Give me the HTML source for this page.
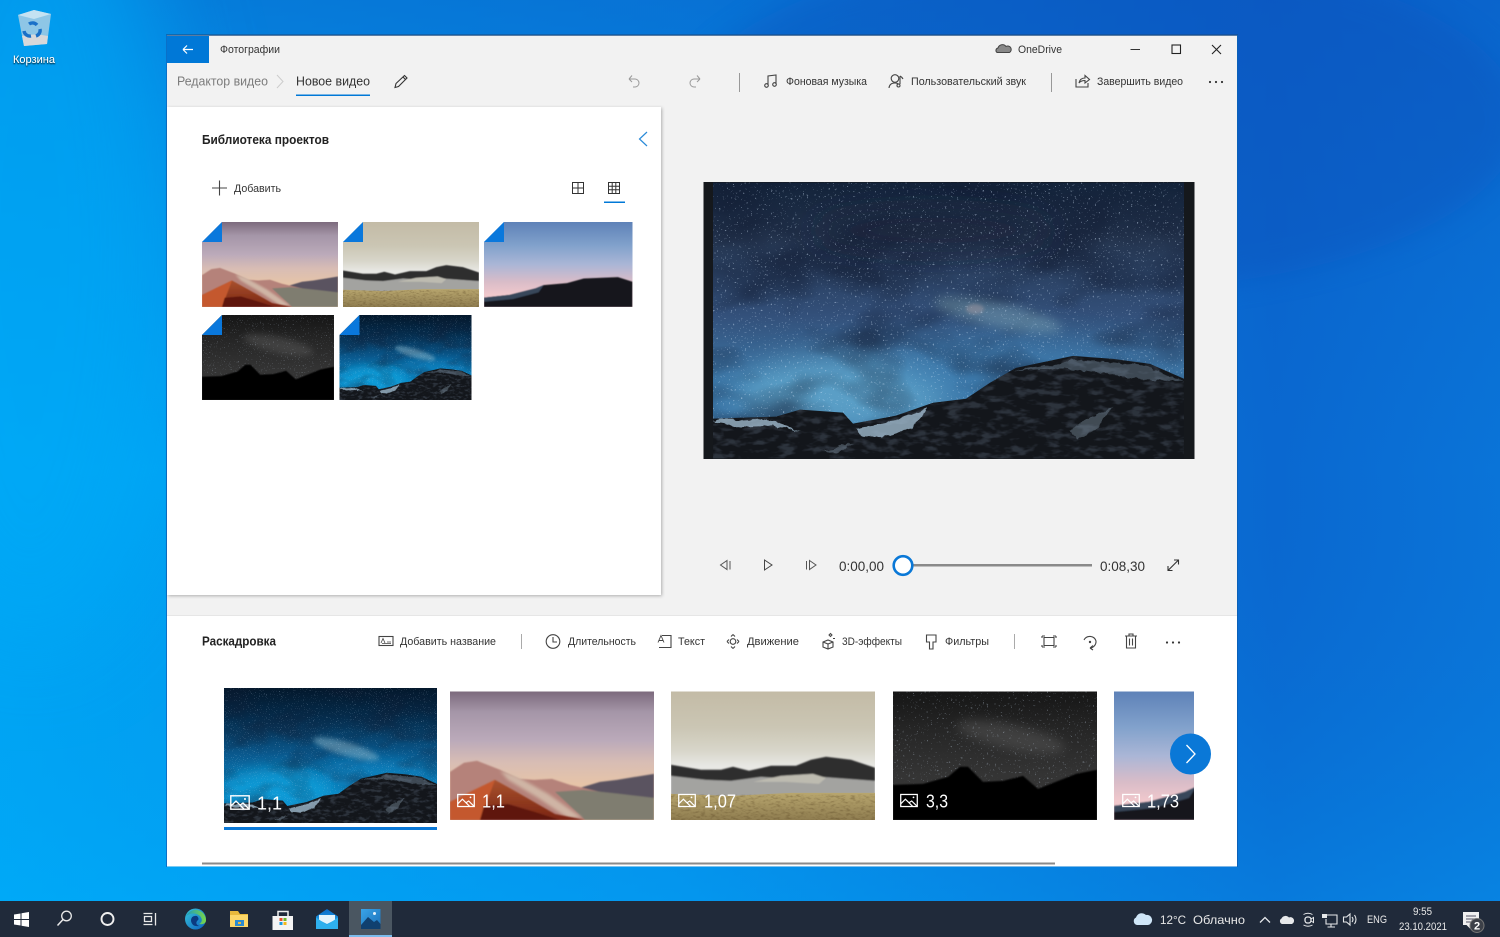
<!DOCTYPE html>
<html lang="ru"><head><meta charset="utf-8"><title>Фотографии</title>
<style>
html,body{margin:0;padding:0;width:1500px;height:937px;overflow:hidden;background:#0a80e0}
svg{display:block}
#page{filter:blur(.3px)}
text{font-family:"Liberation Sans","DejaVu Sans",sans-serif;fill:#333;white-space:pre}
.t{font-size:11px}
.b{font-size:13px;font-weight:bold;fill:#222}
.n{font-size:18px;fill:#fff}
.tb{font-size:12px;fill:#e8e8e8}
.i{fill:none;stroke:#444;stroke-width:1.1}
.w{fill:none;stroke:#fff;stroke-width:1.4}
.l{fill:none;stroke:#e6e8ea;stroke-width:1.3}
</style></head><body>
<svg id="page" width="1500" height="937" viewBox="0 0 1500 937" xmlns="http://www.w3.org/2000/svg">
<defs>
<linearGradient id="bg0" x1="0" y1="0" x2="1" y2="0"><stop offset="0" stop-color="#00a9f6"/><stop offset=".45" stop-color="#0590ea"/><stop offset=".85" stop-color="#0a68d0"/><stop offset="1" stop-color="#0a74d8"/></linearGradient>
<linearGradient id="bg1" x1="0" y1="0" x2="0" y2="1"><stop offset="0" stop-color="#0a55c0" stop-opacity=".5"/><stop offset=".5" stop-color="#0a60c8" stop-opacity="0"/><stop offset="1" stop-color="#00b0ff" stop-opacity=".3"/></linearGradient>
<filter id="b05" x="-10%" y="-10%" width="120%" height="120%"><feGaussianBlur stdDeviation=".8"/></filter>
<filter id="b1" x="-20%" y="-20%" width="140%" height="140%"><feGaussianBlur stdDeviation="1.500"/></filter>
<filter id="b4" x="-30%" y="-30%" width="160%" height="160%"><feGaussianBlur stdDeviation="5"/></filter>
<filter id="b12" x="-50%" y="-50%" width="200%" height="200%"><feGaussianBlur stdDeviation="14"/></filter>
<filter id="b40" x="-50%" y="-50%" width="200%" height="200%"><feGaussianBlur stdDeviation="50"/></filter>
<filter id="stars" x="0" y="0" width="100%" height="100%" color-interpolation-filters="sRGB"><feTurbulence type="fractalNoise" baseFrequency="0.5" numOctaves="2" seed="7"/><feColorMatrix values="0 0 0 0 .85 0 0 0 0 .92 0 0 0 0 1 16 0 0 0 -11"/></filter>
<filter id="clouds" x="0" y="0" width="100%" height="100%" color-interpolation-filters="sRGB"><feTurbulence type="fractalNoise" baseFrequency="0.01 0.018" numOctaves="3" seed="11"/><feColorMatrix values="0 0 0 0 .07 0 0 0 0 .11 0 0 0 0 .2 3 0 0 0 -1.3"/></filter>
<filter id="mtex" x="0" y="0" width="100%" height="100%" color-interpolation-filters="sRGB"><feTurbulence type="fractalNoise" baseFrequency="0.06 0.14" numOctaves="3" seed="5"/><feColorMatrix values="0 0 0 0 .3 0 0 0 0 .34 0 0 0 0 .4 4 0 0 0 -1.9"/></filter>
<filter id="grain" x="0" y="0" width="100%" height="100%" color-interpolation-filters="sRGB"><feTurbulence type="fractalNoise" baseFrequency="0.2 0.5" numOctaves="2" seed="4"/><feColorMatrix values="0 0 0 0 .3 0 0 0 0 .22 0 0 0 0 .1 3 0 0 0 -1.4"/></filter>
<filter id="rough" x="-5%" y="-5%" width="110%" height="110%" color-interpolation-filters="sRGB"><feTurbulence type="fractalNoise" baseFrequency="0.09" numOctaves="3" seed="9" result="n"/><feDisplacementMap in="SourceGraphic" in2="n" scale="7" xChannelSelector="R" yChannelSelector="G"/></filter>
<filter id="sh" x="-5%" y="-5%" width="110%" height="110%"><feDropShadow dx="1" dy="1" stdDeviation="1.500" flood-color="#000" flood-opacity=".28"/></filter>
<filter id="ts" x="-10%" y="-30%" width="120%" height="160%"><feDropShadow dx="0" dy="1" stdDeviation=".8" flood-color="#000" flood-opacity="1"/></filter>
<clipPath id="mclip"><path d="M0 237L63 235 87 228 130 231 140 242 183 234 220 221 253 217 277 201 303 186 360 174 400 177 437 182 471 197V277H0Z"/></clipPath>

<linearGradient id="rs" x1="0" y1="0" x2="0" y2="1"><stop offset="0" stop-color="#7c6a7d"/><stop offset=".16" stop-color="#a596a8"/><stop offset=".38" stop-color="#bbaaba"/><stop offset=".55" stop-color="#d8bdb4"/><stop offset=".72" stop-color="#e6c4a8"/></linearGradient>
<linearGradient id="rr" x1="0" y1="0" x2="0" y2="1"><stop offset="0" stop-color="#a9522e"/><stop offset="1" stop-color="#7a2412"/></linearGradient>
<symbol id="rose" viewBox="0 0 204 128" preserveAspectRatio="none">
<rect width="204" height="128" fill="url(#rs)"/>
<g filter="url(#b05)">
<path d="M130 96L150 90 167 88 204 82V128H130Z" fill="#5a5360"/>
<path d="M0 80L14 71 27 69 50 78 70 87 84 88 102 87 120 93 133 96 150 100 204 112V128H0Z" fill="#b5827a"/>
<path d="M105 100L133 98 170 102 204 106V128H135Z" fill="#7f7d70"/>
</g>
<path d="M50 79L66 84 98 102 132 126H118L88 106 58 88Z" fill="#d6c2b0" opacity=".8" filter="url(#b1)"/>
<g filter="url(#b05)">
<path d="M45 88L70 102 105 122 135 128H0V110Z" fill="url(#rr)"/>
<path d="M0 110L22 99 45 88 30 128H0Z" fill="#c4592e"/>
<path d="M30 128L34 114 58 112 85 120 110 128Z" fill="#5e180c"/>
</g>
</symbol>

<linearGradient id="ss" x1="0" y1="0" x2="0" y2="1"><stop offset="0" stop-color="#c3bba6"/><stop offset=".28" stop-color="#cbc6b4"/><stop offset=".46" stop-color="#d8d6ca"/><stop offset=".58" stop-color="#e8e8e4"/></linearGradient>
<linearGradient id="sf" x1="0" y1="0" x2="0" y2="1"><stop offset="0" stop-color="#b8a66e"/><stop offset="1" stop-color="#8f7d50"/></linearGradient>
<symbol id="sand" viewBox="0 0 204 128" preserveAspectRatio="none">
<rect width="204" height="128" fill="url(#ss)"/>
<g filter="url(#b05)">
<path d="M0 73L30 78 50 78 62 75 78 79 100 74 125 74 140 68 155 65 180 68 204 76V98H0Z" fill="#2f2e2e"/>
<path d="M0 84L35 88 60 89 90 85 120 87 150 85 204 89V108H0Z" fill="#a3a3a0"/>
<path d="M82 90L110 84 142 82 155 86 148 92 115 90Z" fill="#bdbbb0"/>
</g>
<path d="M0 102L60 104 120 101 204 101V128H0Z" fill="url(#sf)"/>
<rect y="103" width="204" height="25" filter="url(#grain)" opacity=".3"/>
</symbol>

<linearGradient id="nb" x1="0" y1="0" x2="0" y2="1"><stop offset="0" stop-color="#161616"/><stop offset=".3" stop-color="#262626"/><stop offset=".65" stop-color="#343434"/></linearGradient>
<symbol id="night" viewBox="0 0 204 128" preserveAspectRatio="none">
<rect width="204" height="128" fill="url(#nb)"/>
<ellipse cx="118" cy="45" rx="55" ry="12" fill="#777" opacity=".3" transform="rotate(12 118 45)" filter="url(#b4)"/>
<rect width="204" height="100" filter="url(#stars)" opacity=".3"/>
<path d="M0 93L30 92 55 85 67 75 75 75 90 90 110 89 130 84 145 97 183 82 204 78V128H0Z" fill="#050505" filter="url(#b05)"/>
</symbol>

<linearGradient id="ds" x1="0" y1="0" x2="0" y2="1"><stop offset="0" stop-color="#5e82b8"/><stop offset=".28" stop-color="#82a2cc"/><stop offset=".5" stop-color="#aab6d6"/><stop offset=".7" stop-color="#d8bcc8"/><stop offset=".85" stop-color="#f0c8cc"/></linearGradient>
<symbol id="dusk" viewBox="0 0 204 128" preserveAspectRatio="none">
<rect width="204" height="128" fill="url(#ds)"/>
<g filter="url(#b05)">
<path d="M0 114L35 110 71 100 82 95 114 92 137 85 184 83 204 90V128H0Z" fill="#14171d"/>
<path d="M0 114L35 110 71 100 82 95 75 106 40 116 0 120Z" fill="#39465a"/>
</g>
</symbol>

<linearGradient id="gs" x1="0" y1="0" x2="0" y2="1"><stop offset="0" stop-color="#13233a"/><stop offset=".2" stop-color="#24344e"/><stop offset=".48" stop-color="#33507a"/><stop offset=".72" stop-color="#3d78a8"/></linearGradient>
<linearGradient id="cs" x1="0" y1="0" x2="0" y2="1"><stop offset="0" stop-color="#03182c"/><stop offset=".22" stop-color="#052c4c"/><stop offset=".5" stop-color="#0a5a8f"/><stop offset=".78" stop-color="#0e88c4"/></linearGradient>
<symbol id="mts" viewBox="0 0 471 277" preserveAspectRatio="none">
<path d="M0 237L63 235 87 228 130 231 140 242 183 234 220 221 253 217 277 201 303 186 360 174 400 177 437 182 471 197V277H0Z" fill="#13161b"/>
<g clip-path="url(#mclip)">
<rect y="170" width="471" height="107" filter="url(#mtex)" opacity=".45"/>
<g filter="url(#rough)">
<path d="M0 238L40 237 63 241 88 250 60 244 20 246ZM142 247L183 239 215 227 198 247 170 256 150 254Z" fill="#a8c4d8" opacity=".75"/>
<path d="M300 189L360 178 400 180 437 186 471 199 430 198 395 192 350 186Z" fill="#7e94a8" opacity=".4"/>
<path d="M355 250L400 224 385 245 365 258ZM110 270L140 262 125 272Z" fill="#7a8c9c" opacity=".45"/>
</g>
</g>
</symbol>
<symbol id="prev" viewBox="0 0 471 277" preserveAspectRatio="none">
<rect width="471" height="277" fill="url(#gs)"/>
<ellipse cx="130" cy="212" rx="105" ry="36" fill="#62a8ce" opacity=".8" filter="url(#b12)"/>
<ellipse cx="300" cy="185" rx="120" ry="30" fill="#3f80b4" opacity=".55" filter="url(#b12)"/>
<rect width="471" height="240" filter="url(#clouds)" opacity=".55"/>
<ellipse cx="285" cy="133" rx="65" ry="12" fill="#7fa8b8" opacity=".45" transform="rotate(12 285 133)" filter="url(#b4)"/>
<ellipse cx="262" cy="127" rx="9" ry="5" fill="#c5a8a8" opacity=".35" filter="url(#b1)"/>
<ellipse cx="220" cy="48" rx="120" ry="22" fill="#121b30" opacity=".5" filter="url(#b12)"/>
<rect width="471" height="240" filter="url(#stars)" opacity=".42"/>
<use href="#mts" width="471" height="277"/>
</symbol>
<symbol id="galaxy" viewBox="0 0 471 277" preserveAspectRatio="none">
<rect width="471" height="277" fill="url(#cs)"/>
<ellipse cx="120" cy="205" rx="120" ry="40" fill="#0fa0dc" opacity=".75" filter="url(#b12)"/>
<ellipse cx="330" cy="175" rx="120" ry="28" fill="#0c88c8" opacity=".6" filter="url(#b12)"/>
<rect width="471" height="240" filter="url(#clouds)" opacity=".35"/>
<ellipse cx="270" cy="125" rx="75" ry="14" fill="#8ab8cc" opacity=".5" transform="rotate(15 270 125)" filter="url(#b4)"/>
<rect width="471" height="240" filter="url(#stars)" opacity=".35"/>
<use href="#mts" width="471" height="277"/>
</symbol>
<symbol id="img" viewBox="0 0 20 15"><rect x=".8" y=".8" width="18.4" height="13.4" fill="none" stroke="#fff" stroke-width="1.4"/><path d="M1 11L6 6 14 14M10 10L13 8 19 14" fill="none" stroke="#fff" stroke-width="1.3"/><circle cx="15" cy="4" r="1" fill="#fff"/></symbol>
<linearGradient id="edge1" x1="0" y1="0" x2="1" y2="1"><stop offset="0" stop-color="#39c6d8"/><stop offset="1" stop-color="#0a5ec0"/></linearGradient>
<linearGradient id="edge2" x1="0" y1="0" x2="1" y2="0"><stop offset="0" stop-color="#1a9ac0"/><stop offset="1" stop-color="#7ad648"/></linearGradient>
<linearGradient id="mail" x1="0" y1="0" x2="0" y2="1"><stop offset="0" stop-color="#0a6cc8"/><stop offset="1" stop-color="#2cb4f2"/></linearGradient>
<linearGradient id="ph" x1="0" y1="0" x2="1" y2="1"><stop offset="0" stop-color="#3aa4e8"/><stop offset="1" stop-color="#1a70b8"/></linearGradient>
</defs>

<!-- Desktop -->
<rect width="1500" height="937" fill="url(#bg0)"/>
<rect width="1500" height="937" fill="url(#bg1)"/>
<ellipse cx="1100" cy="120" rx="420" ry="170" fill="#0a50b8" opacity=".35" filter="url(#b12)"/>
<ellipse cx="30" cy="250" rx="150" ry="400" fill="#00a8f6" opacity=".7" filter="url(#b40)"/>

<!-- Recycle bin -->
<path d="M18 15L34 10 51 14 47 44 24 46Z" fill="#8ec6e6"/>
<path d="M18 15L34 19 51 14 34 10Z" fill="#c4e2f2"/>
<path d="M22 36Q34 33 48 36L47 44 24 46Z" fill="#d8d8da"/>
<path d="M29 24A6 6 0 0 1 37 25M40 29A6 6 0 0 1 36 36M31 36A6 6 0 0 1 24 31" fill="none" stroke="#1a70c8" stroke-width="3.4"/>
<text x="13" y="63" font-size="11" textLength="42" lengthAdjust="spacingAndGlyphs" style="fill:#fff" filter="url(#ts)">Корзина</text>

<!-- Window -->
<rect x="166" y="35" width="1071.5" height="831.5" fill="#f2f2f2"/>
<rect x="166" y="34.500" width="1072" height="1.200" fill="#1a4a80"/>
<rect x="166" y="35" width="1" height="832" fill="#0a70c8"/>
<rect x="1237" y="35" width="1" height="832" fill="#0a60b8"/>
<rect x="167" y="36" width="42" height="27" fill="#0078d7"/>
<path d="M183 49.500H193M183 49.500L187 45.500M183 49.500L187 53.500" fill="none" stroke="#fff" stroke-width="1.200"/>
<text class="t" x="220" y="53" textLength="60" lengthAdjust="spacingAndGlyphs">Фотографии</text>
<path d="M997 52.500A2.500 2.500 0 0 1 998 48A4.500 4.500 0 0 1 1006 46.500A3 3 0 0 1 1009.500 52.500Z" fill="#888" stroke="#444"/>
<text class="t" x="1018" y="53" textLength="44" lengthAdjust="spacingAndGlyphs">OneDrive</text>
<path d="M1130.500 49.500H1140" stroke="#333" fill="none"/>
<rect x="1172" y="45" width="8.500" height="8.500" class="i" style="stroke:#222"/>
<path d="M1212 45L1221 54M1221 45L1212 54" stroke="#222" stroke-width="1.100" fill="none"/>

<!-- Breadcrumb -->
<text x="177" y="85.500" font-size="13" textLength="91" lengthAdjust="spacingAndGlyphs" style="fill:#7c7c7c">Редактор видео</text>
<path d="M277 75L283 81.500 277 88" fill="none" stroke="#ccc"/>
<text x="296" y="85.500" font-size="13" textLength="74" lengthAdjust="spacingAndGlyphs">Новое видео</text>
<rect x="296" y="94.500" width="74" height="1.500" fill="#0078d7"/>
<path d="M395 87.500L396 83.500 404.500 75.500 407 78 398.500 86.500ZM403 77L405.500 79.500" class="i" style="stroke:#333"/>
<path d="M629 79H635A4 4 0 0 1 635 87H633M629 79L632 75.500M629 79L632 82" fill="none" stroke="#999"/>
<path d="M700 79H694A4 4 0 0 0 694 87H696M700 79L697 75.500M700 79L697 82" fill="none" stroke="#999"/>
<rect x="739" y="73" width="1" height="19" fill="#999"/>
<rect x="1051" y="73" width="1" height="19" fill="#999"/>
<path d="M768 85V76L776 75V84" class="i"/><circle cx="766.500" cy="85.500" r="1.800" class="i"/><circle cx="774.500" cy="84.500" r="1.800" class="i"/>
<text class="t" x="786" y="85" textLength="81" lengthAdjust="spacingAndGlyphs">Фоновая музыка</text>
<circle cx="895" cy="78.500" r="3.800" class="i"/><path d="M889 88Q889.500 83 895 83Q897 83 898.500 84M900 76V84M900 76Q902 77 903 79" class="i"/><circle cx="898.500" cy="85.500" r="1.500" class="i"/>
<text class="t" x="911" y="85" textLength="115" lengthAdjust="spacingAndGlyphs">Пользовательский звук</text>
<path d="M1076 79V87H1088V83M1079 83Q1080 78 1085 78V75.500L1089.500 79.500 1085 83V80.500Q1081 80.500 1079 83Z" class="i"/>
<text class="t" x="1097" y="85" textLength="86" lengthAdjust="spacingAndGlyphs">Завершить видео</text>
<g fill="#333"><circle cx="1210" cy="82" r="1.100"/><circle cx="1216" cy="82" r="1.100"/><circle cx="1222" cy="82" r="1.100"/></g>

<!-- Library panel -->
<rect x="167" y="107" width="494" height="488" fill="#fff" filter="url(#sh)"/>
<text class="b" x="202" y="144" textLength="127" lengthAdjust="spacingAndGlyphs">Библиотека проектов</text>
<path d="M647 132L639.500 139 647 146" fill="none" stroke="#2a8ad8" stroke-width="1.200"/>
<path d="M219.500 180.500V195.500M212 188H227" fill="none" stroke="#444" stroke-width="1.100"/>
<text class="t" x="234" y="192" textLength="47" lengthAdjust="spacingAndGlyphs">Добавить</text>
<path d="M572.500 182.500H583.500V193.500H572.500ZM578 182.500V193.500M572.500 188H583.500" fill="none" stroke="#333" stroke-width="1"/>
<path d="M608.500 182.500H619.500V193.500H608.500ZM612.200 182.500V193.500M615.800 182.500V193.500M608.500 186.200H619.500M608.500 189.800H619.500" fill="none" stroke="#333" stroke-width="1"/>
<rect x="604" y="201.500" width="21" height="1.500" fill="#0078d7"/>

<use href="#rose" x="202" y="222" width="136" height="85"/>
<use href="#sand" x="343" y="222" width="136" height="85"/>
<use href="#dusk" x="484" y="222" width="148.500" height="85"/>
<use href="#night" x="202" y="315" width="132" height="85"/>
<use href="#galaxy" x="339.500" y="315" width="132" height="85"/>
<g fill="#fff"><path d="M202 222H222L202 242Z"/><path d="M343 222H363L343 242Z"/><path d="M484 222H504L484 242Z"/><path d="M202 315H222L202 335Z"/><path d="M339.500 315H359.500L339.500 335Z"/></g>
<g fill="#0a78dc"><path d="M222 222V242H202Z"/><path d="M363 222V242H343Z"/><path d="M504 222V242H484Z"/><path d="M222 315V335H202Z"/><path d="M359.500 315V335H339.500Z"/></g>

<!-- Preview -->
<rect x="703.500" y="182" width="491" height="277" fill="#15181c"/>
<use href="#prev" x="713" y="182.500" width="471" height="276"/>

<!-- Player -->
<path d="M730 561V569.500M727 560.500L720.500 565 727 569.500Z" fill="none" stroke="#555"/>
<path d="M764.500 560L772 565 764.500 570Z" fill="none" stroke="#444"/>
<path d="M806.500 561V569.500M809.500 560.500L816 565 809.500 569.500Z" fill="none" stroke="#555"/>
<text x="839" y="571" font-size="14" textLength="45" lengthAdjust="spacingAndGlyphs">0:00,00</text>
<rect x="910" y="564" width="182" height="2.500" fill="#8a8a8a"/>
<circle cx="903" cy="565.500" r="9.300" fill="#fff" stroke="#0a78d7" stroke-width="2.600"/>
<text x="1100" y="571" font-size="14" textLength="45" lengthAdjust="spacingAndGlyphs">0:08,30</text>
<path d="M1168 570.500L1178.500 560M1174 560H1178.500V564.500M1168 566V570.500H1172.500" fill="none" stroke="#333" stroke-width="1.100"/>

<!-- Storyboard -->
<rect x="167" y="616" width="1070" height="250" fill="#fff"/>
<rect x="167" y="615" width="1070" height="1" fill="#e6e6e6"/>
<text class="b" x="202" y="645.500" textLength="74" lengthAdjust="spacingAndGlyphs">Раскадровка</text>
<rect x="379" y="636.500" width="14" height="9" class="i"/><path d="M381 643L383 638.500 385 643M387 642H391M382 643.500H391" fill="none" stroke="#444" stroke-width=".8"/>
<text class="t" x="400" y="645" textLength="96" lengthAdjust="spacingAndGlyphs">Добавить название</text>
<rect x="521" y="634" width="1" height="15" fill="#aaa"/>
<circle cx="553" cy="641.500" r="6.800" class="i"/><path d="M553 637V642H557" class="i"/>
<text class="t" x="568" y="645" textLength="68" lengthAdjust="spacingAndGlyphs">Длительность</text>
<path d="M662 635.500H671V647.500H659" class="i"/><path d="M658 642.500L661 635.500 664 642.500M659 640.500H663" fill="none" stroke="#444" stroke-width=".9"/>
<text class="t" x="678" y="645" textLength="27" lengthAdjust="spacingAndGlyphs">Текст</text>
<circle cx="733" cy="641.500" r="2.800" class="i"/><path d="M733 634.500L735 636.500M733 634.500L731 636.500M733 648.500L735 646.500M733 648.500L731 646.500M727 641.500L729 639.500M727 641.500L729 643.500M739 641.500L737 639.500M739 641.500L737 643.500" class="i"/>
<text class="t" x="747" y="645" textLength="52" lengthAdjust="spacingAndGlyphs">Движение</text>
<path d="M823 642L828 640 833 642V647L828 649 823 647ZM823 642L828 644 833 642M828 644V649" class="i"/><path d="M829 635L830.500 636.500 832 635 830.500 633.500ZM833 638.500H835" fill="none" stroke="#444"/>
<text class="t" x="842" y="645" textLength="60" lengthAdjust="spacingAndGlyphs">3D-эффекты</text>
<path d="M926.500 635H936V642H933V649H929.500V642H926.500Z" class="i"/>
<text class="t" x="945" y="645" textLength="44" lengthAdjust="spacingAndGlyphs">Фильтры</text>
<rect x="1014" y="634" width="1" height="15" fill="#aaa"/>
<path d="M1044 637.500H1054V645.500H1044ZM1042 636V638M1042 636H1045M1056 636V638M1056 636H1053M1042 647V645M1042 647H1045M1056 647V645M1056 647H1053" class="i"/>
<path d="M1084 640A6.500 6.500 0 0 1 1096 641A6.500 6.500 0 0 1 1090 648M1090 648L1093 645.500M1090 648L1093 650" class="i"/><circle cx="1090" cy="642" r="1.200" fill="#444"/>
<path d="M1125 636H1137M1129 636V634H1133V636M1126.500 636V648H1135.500V636M1129.500 638.500V645.500M1132.500 638.500V645.500" class="i"/>
<g fill="#333"><circle cx="1167" cy="642.500" r="1.100"/><circle cx="1173" cy="642.500" r="1.100"/><circle cx="1179" cy="642.500" r="1.100"/></g>

<use href="#galaxy" x="224" y="688" width="213" height="135"/>
<rect x="224" y="827" width="213" height="3" fill="#0a78d7"/>
<use href="#rose" x="450" y="691.500" width="204" height="128.500"/>
<use href="#sand" x="671" y="691.500" width="204" height="128.500"/>
<use href="#night" x="893" y="691.500" width="204" height="128.500"/>
<svg x="1114" y="691.500" width="80" height="128.500" viewBox="0 0 80 128.500"><use href="#dusk" width="204" height="128.500"/></svg>

<use href="#img" x="230" y="795" width="20" height="15"/>
<text class="n" x="257" y="809.500" textLength="25" lengthAdjust="spacingAndGlyphs">1,1</text>
<use href="#img" x="457" y="793.500" width="18" height="14"/>
<text class="n" x="482" y="807.500" textLength="23" lengthAdjust="spacingAndGlyphs">1,1</text>
<use href="#img" x="678" y="793.500" width="18" height="14"/>
<text class="n" x="704" y="807.500" textLength="32" lengthAdjust="spacingAndGlyphs">1,07</text>
<use href="#img" x="900" y="793.500" width="18" height="14"/>
<text class="n" x="926" y="807.500" textLength="22" lengthAdjust="spacingAndGlyphs">3,3</text>
<use href="#img" x="1122" y="793.500" width="18" height="14"/>
<text class="n" x="1147" y="807.500" textLength="32" lengthAdjust="spacingAndGlyphs">1,73</text>

<circle cx="1190.500" cy="754" r="20.500" fill="#0a78d7"/>
<path d="M1186.500 745L1195 754 1186.500 763" fill="none" stroke="#fff" stroke-width="1.300"/>
<rect x="202" y="862.500" width="853" height="2" fill="#8a8a8a"/>

<!-- Taskbar -->
<rect y="901" width="1500" height="36" fill="#202a3a"/>
<rect x="349" y="901" width="43" height="36" fill="#4a5661"/>
<rect x="349" y="935" width="43" height="2" fill="#7cbcec"/>
<path d="M14 914.500L20.500 913.500V919H14ZM21.500 913.300L29 912V919H21.500ZM14 920H20.500V925.500L14 924.500ZM21.500 920H29V927L21.500 925.700Z" fill="#fff"/>
<circle cx="66.500" cy="916" r="4.800" fill="none" stroke="#e8e8e8" stroke-width="1.300"/><path d="M63 919.500L57.500 925.500" stroke="#e8e8e8" stroke-width="1.500"/>
<circle cx="107.500" cy="919" r="6" fill="none" stroke="#f0f0f0" stroke-width="1.900"/>
<path d="M143.500 913.500H152.500M143.500 924.500H152.500M144.500 916.500H151.500V921.500H144.500ZM155.500 913V925.500" fill="none" stroke="#e8e8e8" stroke-width="1.300"/>
<circle cx="195.500" cy="919" r="10.500" fill="url(#edge1)"/>
<path d="M186 916A10.500 10.500 0 0 1 206 921Q205 925 199 924Q204 921 200 916Q194 911 186 916Z" fill="url(#edge2)"/>
<path d="M191 921Q191 915 197 916Q200 919 197 921Q195 924 199 926Q192 927 191 921Z" fill="#0b3a80"/>
<path d="M230 911H238L240 914H248V927H230Z" fill="#e8b93c"/><rect x="230" y="915" width="18" height="12" fill="#fcd768"/><rect x="235" y="920" width="9" height="6" fill="#2a8ad0"/><rect x="238" y="922" width="3" height="2" fill="#e8b93c"/>
<rect x="272.500" y="916" width="20.500" height="14" fill="#f4f4f4"/><path d="M278 916V911.500H288V916" fill="none" stroke="#f0f0f0" stroke-width="1.500"/>
<rect x="279.500" y="918" width="3" height="3" fill="#e8502a"/><rect x="283.500" y="918" width="3" height="3" fill="#6cb82c"/><rect x="279.500" y="922" width="3" height="3" fill="#1a9ae0"/><rect x="283.500" y="922" width="3" height="3" fill="#f4b81a"/>
<path d="M316 916.500L327 909 338 916.500V929H316Z" fill="url(#mail)"/><path d="M319 915H335V920L327 924 319 920Z" fill="#e4f4fc"/><path d="M316 917.500L327 925 338 917.500V929H316Z" fill="#2eb0ee"/>
<rect x="361" y="909" width="19.500" height="20" fill="url(#ph)"/><circle cx="374.500" cy="913.500" r="1.500" fill="#e8f4fc"/><path d="M361 925L368 917 374 922 377 920 380.500 924V929H361Z" fill="#10406f"/>

<path d="M1137 925A4 4 0 0 1 1136 917.500A6 6 0 0 1 1146 915A5 5 0 0 1 1148 925Z" fill="#cfe6f8"/>
<text class="tb" x="1160" y="924" font-size="13" textLength="26" lengthAdjust="spacingAndGlyphs">12°C</text>
<text class="tb" x="1193" y="924" textLength="52" lengthAdjust="spacingAndGlyphs">Облачно</text>
<path d="M1260 922.500L1265 917.500 1270 922.500" class="l"/>
<path d="M1282 924A3 3 0 0 1 1281.500 918.500A4.500 4.500 0 0 1 1289 917.500A3.200 3.200 0 0 1 1292 924Z" fill="#e6e8ea"/>
<rect x="1305" y="917" width="6" height="6" rx="2.500" class="l"/><path d="M1303.500 914.500Q1308 912 1312.500 914.500M1303.500 925Q1308 927.500 1312.500 925M1311 919L1313.500 917.500V922.500L1311 921" class="l" style="stroke-width:1"/>
<path d="M1326 915H1337V924H1326V919M1331 924V927M1327.500 927H1335" class="l" style="stroke-width:1.100"/><rect x="1322" y="914" width="5" height="4" fill="#e6e8ea"/>
<path d="M1343.500 917H1346.500L1350 914V925L1346.500 922H1343.500ZM1352 917Q1354 919.500 1352 922M1354.500 915Q1357.500 919.500 1354.500 924" class="l" style="stroke-width:1.100"/>
<text class="tb" x="1367" y="923" style="font-size:11px" textLength="20" lengthAdjust="spacingAndGlyphs">ENG</text>
<text class="tb" x="1413" y="915" style="font-size:11px" textLength="19" lengthAdjust="spacingAndGlyphs">9:55</text>
<text class="tb" x="1399" y="930" style="font-size:11px" textLength="48" lengthAdjust="spacingAndGlyphs">23.10.2021</text>
<path d="M1463 912H1479V925H1470V928.500L1466.500 925H1463Z" fill="#f0f0f0"/><path d="M1466 916H1476M1466 919H1476M1466 922H1472" stroke="#556" stroke-width="1"/>
<circle cx="1477" cy="925.500" r="7" fill="#3c4048" stroke="#777"/>
<text x="1477" y="929.500" font-size="11" font-weight="bold" text-anchor="middle" style="fill:#fff">2</text>
</svg>
</body></html>
